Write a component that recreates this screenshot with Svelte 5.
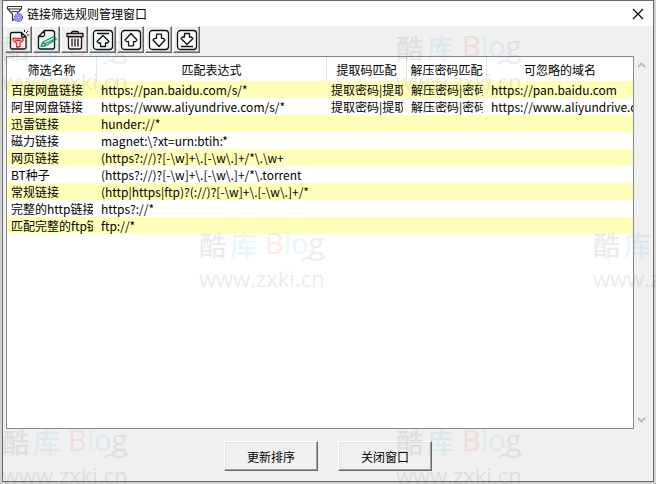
<script>
  const tools = [
    { id: 'new', label: '新建规则' },
    { id: 'edit', label: '编辑规则' },
    { id: 'delete', label: '删除规则' },
    { id: 'top', label: '移到顶部' },
    { id: 'up', label: '上移' },
    { id: 'down', label: '下移' },
    { id: 'bottom', label: '移到底部' }
  ];
  const arrowUp = 'M12 5.5l6 6.5-1.6 1.6h-1.9v4.2h-5v-4.2H7.6L6 12z';
  const arrowDown = 'M12 18.5l6-6.5-1.6-1.6h-1.9V6.2h-5v4.2H7.6L6 12z';
  const columns = [
    { key: 'name', label: '筛选名称' },
    { key: 'pattern', label: '匹配表达式' },
    { key: 'extract', label: '提取码匹配' },
    { key: 'unzip', label: '解压密码匹配' },
    { key: 'domain', label: '可忽略的域名' }
  ];
  const rows = [
    ['百度网盘链接', 'https://pan.baidu.com/s/*', '提取密码|提取码', '解压密码|密码', 'https://pan.baidu.com'],
    ['阿里网盘链接', 'https://www.aliyundrive.com/s/*', '提取密码|提取码', '解压密码|密码', 'https://www.aliyundrive.com'],
    ['迅雷链接', 'hunder://*', '', '', ''],
    ['磁力链接', 'magnet:\\?xt=urn:btih:*', '', '', ''],
    ['网页链接', '(https?://)?[-\\w]+\\.[-\\w\\.]+/*\\.\\w+', '', '', ''],
    ['BT种子', '(https?://)?[-\\w]+\\.[-\\w\\.]+/*\\.torrent', '', '', ''],
    ['常规链接', '(http|https|ftp)?(://)?[-\\w]+\\.[-\\w\\.]+/*', '', '', ''],
    ['完整的http链接', 'https?://*', '', '', ''],
    ['匹配完整的ftp链接', 'ftp://*', '', '', '']
  ];
  const marks = [
    [2, 34], [396, 34], [199, 231], [593, 231], [2, 428], [396, 428]
  ];
</script>

<div class="desktop">
  <main class="window">
    <header class="titlebar">
      <svg width="18" height="18" viewBox="0 0 18 18" fill="none" stroke="#333" stroke-width="1.2">
        <path d="M1.5 1.5h14v2.2L11 8.300M1.5 1.5v2.2L6.500 9v6.500l2-1.200M2 4h13M5.500 6.500h6" />
        <circle cx="12.500" cy="12.500" r="4" fill="#a5a0ff" stroke="#5b55d8" stroke-dasharray="1.4 .7" />
        <circle cx="12.500" cy="12.500" r="1.500" fill="#d6d3ff" stroke="#5b55d8" stroke-width=".8" />
      </svg>
      <h1>链接筛选规则管理窗口</h1>
      <button class="close" aria-label="关闭">
        <svg width="12" height="12" viewBox="0 0 12 12" stroke="#000" stroke-width="1.1"><path d="M1 1l10 10M11 1L1 11" /></svg>
      </button>
    </header>

    <div class="toolbar" role="toolbar" aria-label="规则操作">
      {#each tools as tool (tool.id)}
        <button class="tool" aria-label={tool.label}>
          <svg width="24" height="24" viewBox="0 0 24 24" fill="none" stroke="#111" stroke-width="1.3" stroke-linejoin="round">
            {#if tool.id === 'new'}
              <path d="M14.500 4.500H5q-1.500 0-1.500 1.500v13.500q0 1.500 1.500 1.500h12.500q1.500 0 1.500-1.500V9l-4.500-4.500V8q0 1 1 1H19" fill="#fff" />
              <path d="M17.500 4V2M19 5l2-2M20 7h2" stroke-width="1" />
              <path d="M6 10.500h10v2L13 15v3.500l-3.500.5v-4L6 12.500zM8 12.500h6" stroke="#ee2a30" />
            {:else if tool.id === 'edit'}
              <path d="M9.500 2.500H17q2.500 0 2.500 2.500v14q0 2-2 2H5.500q-2 0-2-2V8.500zM3.500 8.500H8q1.500 0 1.500-1.500V2.500" fill="#fff" />
              <path d="M6 18.500l2-4.500 10-5q3-.5 3 2.500L11 17.500zM8 14l3 3.500M10 15.500l9-4" stroke="#169447" />
            {:else if tool.id === 'delete'}
              <path d="M5.500 8.500h13V19q0 2-2 2h-9q-2 0-2-2z" fill="#fff" />
              <path d="M4 5.500h16v3H4z" fill="#fff" />
              <path d="M8.500 5.500V5q0-1.500 1.500-1.500h4q1.500 0 1.500 1.500v.5M9 10.500v8M12 10.500v8M15 10.500v8" />
            {:else}
              <rect x="2.500" y="2.500" width="19" height="19" rx="3" fill="#fff" />
              {#if tool.id === 'top'}
                <path d="M6 5.500h12M12 7.500l6 6-1.500 1.500h-2v3.500h-5V15h-2L6 13.500z" />
              {:else if tool.id === 'up'}
                <path d={arrowUp} />
              {:else if tool.id === 'down'}
                <path d={arrowDown} />
              {:else}
                <path d="M6 18.500h12M12 16.500l6-6L16.500 9h-2V5.500h-5V9h-2L6 10.500z" />
              {/if}
            {/if}
          </svg>
        </button>
      {/each}
    </div>

    <section class="list">
      <div class="sheet">
        <table>
          <thead>
            <tr>
              {#each columns as col (col.key)}<th class={col.key} scope="col">{col.label}</th>{/each}
            </tr>
          </thead>
          <tbody>
            {#each rows as row}
              <tr>
                {#each row as cell}
                  <td><div>{cell}</div></td>
                {/each}
              </tr>
            {/each}
          </tbody>
        </table>
      </div>
      <div class="scroll">
        <svg width="9" height="6" viewBox="0 0 9 6" fill="none" stroke="#bbb" stroke-width="2"><path d="M1 5l3.500-3.500L8 5" /></svg>
        <svg width="9" height="6" viewBox="0 0 9 6" fill="none" stroke="#bbb" stroke-width="2"><path d="M1 1l3.500 3.500L8 1" /></svg>
      </div>
    </section>

    <footer>
      <button class="action">更新排序</button>
      <button class="action">关闭窗口</button>
    </footer>
  </main>

  <div class="marks" aria-hidden="true">
    {#each marks as [x, y]}
      <div class="mark" style="left: {x}px; top: {y}px">
        <div class="brand">
          <span class="ku">酷</span><span class="ku blue">库</span>
          <span class="blog"><i class="red">B</i><i class="green">l</i><i class="blue">o</i><i class="navy">g</i></span>
        </div>
        <div class="site">www.zxki.cn</div>
        <svg class="wave" width="26" height="8" viewBox="0 0 26 8" fill="none" stroke="#557" stroke-width="2"><path d="M1 6q5-5 11-2t13-2" /></svg>
      </div>
    {/each}
  </div>
</div>

<style>
  :global(body) {
    margin: 0;
    background: #d2d2d2;
  }
  .desktop {
    position: relative;
    box-sizing: border-box;
    min-height: 100vh;
    padding: 0 2px 2px;
    display: flex;
    overflow: hidden;
    font: 12px/17px 'Noto Sans CJK SC', sans-serif;
    color: #000;
  }
  .window {
    flex: 1;
    min-width: 0;
    display: flex;
    flex-direction: column;
    border: 1px solid #6b6b6b;
    background: #f0f0f0;
  }
  .titlebar {
    display: flex;
    align-items: center;
    gap: 3px;
    height: 25px;
    padding: 0 9px 0 3px;
    background: #fff;
  }
  h1 {
    flex: 1;
    margin: 0;
    font-size: 12px;
    font-weight: 400;
  }
  button {
    font: inherit;
    color: inherit;
    padding: 0;
  }
  .close {
    display: flex;
    border: 0;
    background: none;
  }
  .toolbar {
    display: flex;
    gap: 1px;
    height: 30px;
    padding: 0 2px;
  }
  .tool {
    display: flex;
    align-items: center;
    justify-content: center;
    box-sizing: border-box;
    width: 27px;
    height: 27px;
    background: #f0f0f0;
    border: 1px solid;
    border-color: #fff #696969 #696969 #fff;
    box-shadow: inset -1px -1px #a0a0a0;
  }
  .tool svg {
    flex: none;
  }
  .list {
    flex: 1;
    display: flex;
    padding-left: 3px;
  }
  .sheet {
    flex: 1;
    min-width: 0;
    background: #fff;
    border: 1px solid #828790;
  }
  table {
    width: 100%;
    table-layout: fixed;
    border-collapse: separate;
    border-spacing: 0;
  }
  th {
    height: 24px;
    padding: 0;
    box-sizing: border-box;
    border-right: 1px solid #e5e5e5;
    font-weight: 400;
    white-space: nowrap;
  }
  th:last-child {
    border-right: 0;
  }
  th.name { width: 90px; }
  th.pattern { width: 230px; }
  th.extract, th.unzip { width: 80px; }
  td {
    height: 17px;
    padding: 0 4px;
  }
  td:last-child {
    padding-right: 0;
  }
  td div {
    height: 17px;
    overflow: hidden;
    white-space: nowrap;
  }
  tbody tr:nth-child(odd) {
    background: #ffffb9;
  }
  .scroll {
    width: 19px;
    display: flex;
    flex-direction: column;
    justify-content: space-between;
    align-items: center;
    padding: 6px 4px 6px 0;
    box-sizing: border-box;
  }
  footer {
    display: flex;
    justify-content: center;
    gap: 20px;
    padding: 12px 0 10px;
  }
  .action {
    box-sizing: border-box;
    width: 94px;
    height: 30px;
    background: #f0f0f0;
    border: 1px solid;
    border-color: #fff #696969 #696969 #fff;
    box-shadow: inset -1px -1px #a0a0a0, inset 1px 1px #e3e3e3;
  }
  .marks {
    position: absolute;
    inset: 0;
    pointer-events: none;
    overflow: hidden;
  }
  .mark {
    position: absolute;
    width: 130px;
    opacity: 0.09;
    color: #333;
    white-space: nowrap;
    font-family: 'Open Sans', 'Noto Sans CJK SC', sans-serif;
  }
  .brand {
    display: flex;
    gap: 4px;
    height: 33px;
    line-height: 30px;
  }
  .ku {
    font-size: 27px;
    font-weight: 500;
  }
  .blog {
    padding-left: 4px;
    font-size: 29px;
    line-height: 24px;
  }
  .blog i {
    font-style: normal;
  }
  .red { color: #f22; }
  .green { color: #3d6; }
  .blue { color: #1ae; }
  .navy { color: #447; }
  .site {
    font-size: 22px;
    line-height: 28px;
  }
  .wave {
    position: absolute;
    left: 101px;
    top: 24px;
  }
</style>
